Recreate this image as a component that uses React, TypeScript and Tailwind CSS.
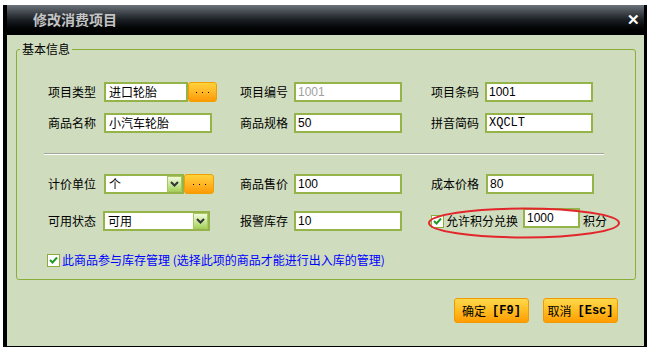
import React from "react";

const CJK = { fontFamily: '"Noto Sans CJK SC", "Liberation Sans", sans-serif' };
const SANS = { fontFamily: '"Liberation Sans", "Noto Sans CJK SC", sans-serif' };
const MONO = { fontFamily: '"Liberation Mono", "Noto Sans CJK SC", monospace' };

function Label({ text, w }: { text: string; w: string }) {
  return (
    <span className={`${w} shrink-0 text-[12px] leading-[14px] text-black`} style={CJK}>
      {text}
    </span>
  );
}

function Input({ value, w, grey, mono }: { value: string; w: string; grey?: boolean; mono?: boolean }) {
  return (
    <div
      className={`${w} h-[20px] shrink-0 bg-white border-2 border-[#94b44a] flex items-center pl-[2px] text-[12px] leading-[14px] ${grey ? "text-[#a0a0a0]" : "text-black"}`}
      style={mono ? MONO : SANS}
    >
      {value}
    </div>
  );
}

function CnInput({ value, w }: { value: string; w: string }) {
  return (
    <div
      className={`${w} h-[20px] shrink-0 bg-white border-2 border-[#94b44a] flex items-center pl-[3px] text-[12px] leading-[14px] text-black`}
      style={CJK}
    >
      {value}
    </div>
  );
}

function DotsButton({ w }: { w: string }) {
  return (
    <div
      className={`${w} h-[20px] shrink-0 rounded-[3px] border border-[#f0a000] bg-gradient-to-b from-[#ffd23a] to-[#ff9a00] flex items-center justify-center gap-[5px]`}
    >
      <span className="w-[1px] h-[1px] bg-black" />
      <span className="w-[1px] h-[1px] bg-black" />
      <span className="w-[1px] h-[1px] bg-black" />
    </div>
  );
}

function Arrow() {
  return (
    <div className="w-[15px] h-[16px] shrink-0 border border-[#a8c860] bg-gradient-to-b from-[#f2fadc] to-[#a6d35a] flex items-center justify-center">
      <svg width="9" height="6" viewBox="0 0 9 6">
        <path d="M1 1 L4.5 4.5 L8 1" stroke="#333" strokeWidth="2" fill="none" />
      </svg>
    </div>
  );
}

function Select({ value, w }: { value: string; w: string }) {
  return (
    <div
      className={`${w} h-[20px] shrink-0 bg-white border-2 border-[#94b44a] flex items-center justify-between pl-[3px] pr-0 text-[12px] leading-[14px] text-black`}
      style={CJK}
    >
      <span>{value}</span>
      <Arrow />
    </div>
  );
}

function Check() {
  return (
    <div className="w-[13px] h-[13px] shrink-0 bg-white border border-[#8aae3a] flex items-center justify-center">
      <svg width="9" height="8" viewBox="0 0 9 8">
        <path d="M1 4 L3.5 6.5 L8 1.5" stroke="#1f9a2a" strokeWidth="2" fill="none" />
      </svg>
    </div>
  );
}

function OrangeButton({ cn, en }: { cn: string; en: string }) {
  return (
    <div className="w-[75px] h-[25px] rounded-[3px] border border-[#f09a00] bg-gradient-to-b from-[#ffd84a] via-[#ffbd20] to-[#ff9c00] flex items-center justify-center text-[12px] leading-[14px] text-black">
      <span style={CJK}>{cn}</span>
      <span style={MONO} className="ml-[6px] font-bold">
        {en}
      </span>
    </div>
  );
}

export default function App() {
  return (
    <div className="w-[648px] h-[347px] bg-white pt-[5px] pl-[3px] overflow-hidden">
      <div className="w-[644px] h-[342px] bg-black pl-[4px] pr-[3px] pb-[1px] flex flex-col">
        {/* title bar */}
        <div className="h-[30px] shrink-0 bg-gradient-to-b from-[#6c737a] via-[#1a1f24] to-[#000000] flex items-center justify-between pl-[26px] pr-[4px]">
          <span className="text-[14px] font-bold text-[#c4c4c4] tracking-[0px] -mt-[2px]" style={CJK}>
            修改消费项目
          </span>
          <span className="text-[15px] font-bold text-white leading-none -mt-[2px]" style={SANS}>
            ✕
          </span>
        </div>
        {/* content */}
        <div className="flex-1 bg-[#cfdcbe] flex flex-col">
          <fieldset className="ml-[9px] mt-[6px] w-[620px] h-[239px] border border-[#8aae3a] rounded-[3px] p-0 m-0">
            <legend className="ml-[3px] px-[2px] text-[12px] leading-[16px] text-black" style={CJK}>
              基本信息
            </legend>
            <div className="flex flex-col">
              {/* row 1 */}
              <div className="flex items-center h-[20px] mt-[25px] pl-[31px]">
                <div className="w-[192px] flex items-center">
                  <Label text="项目类型" w="w-[56px]" />
                  <CnInput value="进口轮胎" w="w-[84px]" />
                  <DotsButton w="w-[29px]" />
                </div>
                <div className="w-[191px] flex items-center">
                  <Label text="项目编号" w="w-[54px]" />
                  <Input value="1001" w="w-[108px]" grey />
                </div>
                <div className="flex items-center">
                  <Label text="项目条码" w="w-[54px]" />
                  <Input value="1001" w="w-[108px]" />
                </div>
              </div>
              {/* row 2 */}
              <div className="flex items-center h-[20px] mt-[11px] pl-[31px]">
                <div className="w-[192px] flex items-center">
                  <Label text="商品名称" w="w-[56px]" />
                  <CnInput value="小汽车轮胎" w="w-[108px]" />
                </div>
                <div className="w-[191px] flex items-center">
                  <Label text="商品规格" w="w-[54px]" />
                  <Input value="50" w="w-[108px]" />
                </div>
                <div className="flex items-center">
                  <Label text="拼音简码" w="w-[54px]" />
                  <Input value="XQCLT" w="w-[108px]" mono />
                </div>
              </div>
              {/* separator */}
              <div className="ml-[27px] w-[560px] mt-[20px] h-[2px] border-t border-[#a3a89a] border-b border-b-white" />
              {/* row 3 */}
              <div className="flex items-center h-[20px] mt-[19px] pl-[31px]">
                <div className="w-[192px] flex items-center">
                  <Label text="计价单位" w="w-[56px]" />
                  <Select value="个" w="w-[80px]" />
                  <DotsButton w="w-[30px]" />
                </div>
                <div className="w-[191px] flex items-center">
                  <Label text="商品售价" w="w-[54px]" />
                  <Input value="100" w="w-[108px]" />
                </div>
                <div className="flex items-center">
                  <Label text="成本价格" w="w-[55px]" />
                  <Input value="80" w="w-[108px]" />
                </div>
              </div>
              {/* row 4 */}
              <div className="flex items-center h-[20px] mt-[17px] pl-[31px]">
                <div className="w-[192px] flex items-center">
                  <Label text="可用状态" w="w-[55px]" />
                  <Select value="可用" w="w-[107px]" />
                </div>
                <div className="w-[191px] flex items-center">
                  <Label text="报警库存" w="w-[54px]" />
                  <Input value="10" w="w-[108px]" />
                </div>
                <div className="relative flex items-center">
                  <Check />
                  <span className="ml-[2px] text-[12px] leading-[14px] text-black" style={CJK}>
                    允许积分兑换
                  </span>
                  <div className="ml-[5px] -mt-[6px]">
                    <Input value="1000" w="w-[57px]" />
                  </div>
                  <span className="ml-[3px] text-[12px] leading-[14px] text-black" style={CJK}>
                    积分
                  </span>
                  <svg
                    className="absolute left-[-4px] top-[-7px] pointer-events-none"
                    width="194"
                    height="32"
                    viewBox="0 0 194 32"
                  >
                    <ellipse cx="97" cy="16" rx="95" ry="14.5" fill="none" stroke="#e3262b" strokeWidth="2" />
                  </svg>
                </div>
              </div>
              {/* row 5 */}
              <div className="flex items-center h-[14px] mt-[22px] pl-[30px]">
                <Check />
                <span className="ml-[2px] text-[12px] leading-[14px] text-[#0000ff]" style={CJK}>
                  此商品参与库存管理 (选择此项的商品才能进行出入库的管理)
                </span>
              </div>
            </div>
          </fieldset>
          <div className="flex justify-end gap-[14px] pr-[26px] mt-[18px]">
            <OrangeButton cn="确定" en="[F9]" />
            <OrangeButton cn="取消" en="[Esc]" />
          </div>
        </div>
      </div>
    </div>
  );
}
